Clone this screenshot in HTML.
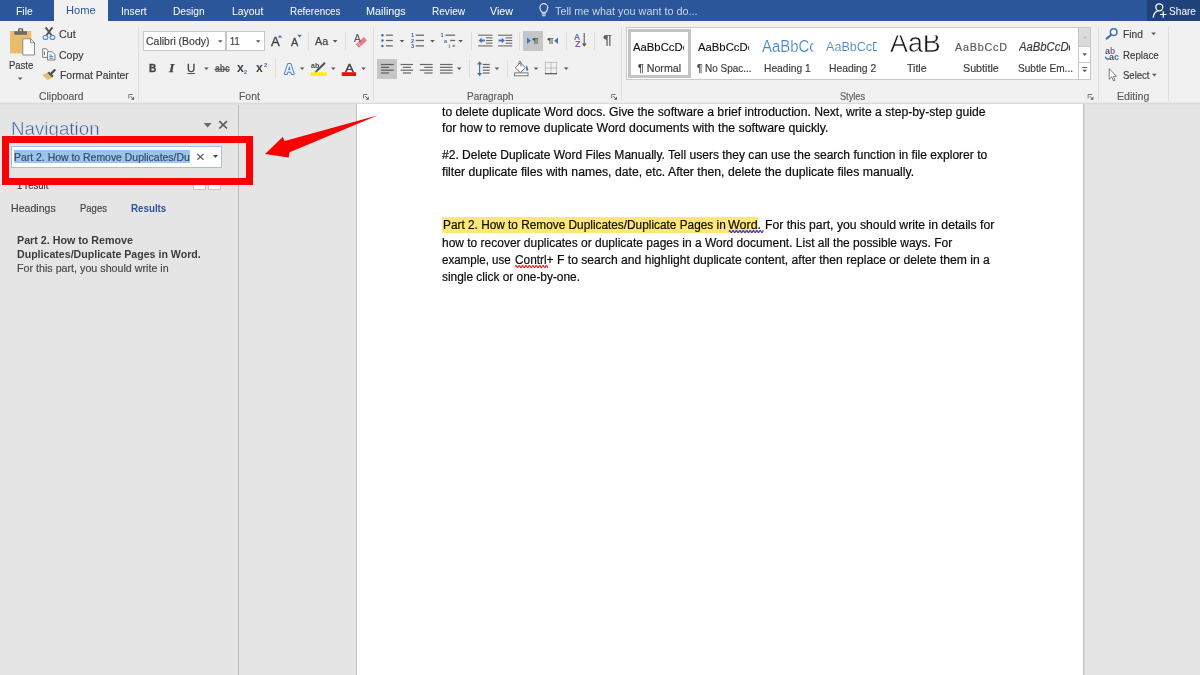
<!DOCTYPE html>
<html><head><meta charset="utf-8"><title>Word</title>
<style>

html,body{margin:0;padding:0;}
body{width:1200px;height:675px;overflow:hidden;position:relative;background:#e5e5e5;font-family:"Liberation Sans",sans-serif;color:#444;}
.t{position:absolute;white-space:nowrap;line-height:1;transform-origin:0 0;display:block;}
.a{position:absolute;display:block;}
.sep{position:absolute;width:1px;background:#dedede;}
svg{position:absolute;overflow:visible;}

</style></head>
<body>

<!-- title/tab bar -->
<div class="a" style="left:0;top:0;width:1200px;height:21px;background:#2b579a;"></div>
<div class="a" style="left:1147px;top:0;width:53px;height:21px;background:#1e4279;"></div>
<div class="a" style="left:54px;top:0;width:54px;height:22px;background:#f1f1f1;"></div>
<!-- ribbon -->
<div class="a" style="left:0;top:21px;width:1200px;height:82px;background:#f1f1f1;"></div>
<div class="a" style="left:0;top:102px;width:1200px;height:1px;background:#ebebeb;"></div>
<div class="a" style="left:0;top:103px;width:1200px;height:1px;background:#dadada;"></div>
<div class="a" style="left:0;top:104px;width:1200px;height:1px;background:#e1e1e1;"></div>
<!-- nav pane border -->
<div class="a" style="left:238px;top:105px;width:1px;height:570px;background:#bdbdbd;"></div>
<!-- page -->
<div class="a" style="left:1084px;top:104px;width:1px;height:571px;background:#dadada;"></div>
<div class="a" style="left:356px;top:104px;width:728px;height:571px;background:#c2c2c2;"></div>
<div class="a" style="left:357px;top:104px;width:726px;height:571px;background:#ffffff;"></div>

<!-- group separators -->
<div class="sep" style="left:138px;top:27px;height:74px;"></div>
<div class="sep" style="left:373px;top:27px;height:74px;"></div>
<div class="sep" style="left:621px;top:27px;height:74px;"></div>
<div class="sep" style="left:1098px;top:27px;height:74px;"></div>
<div class="sep" style="left:1168px;top:27px;height:74px;"></div>
<!-- small separators -->
<div class="sep" style="left:308px;top:32px;height:18px;"></div>
<div class="sep" style="left:345px;top:32px;height:18px;"></div>
<div class="sep" style="left:275px;top:59px;height:20px;"></div>
<div class="sep" style="left:471px;top:32px;height:18px;"></div>
<div class="sep" style="left:519px;top:32px;height:18px;"></div>
<div class="sep" style="left:566px;top:32px;height:18px;"></div>
<div class="sep" style="left:594px;top:32px;height:18px;"></div>
<div class="sep" style="left:469px;top:60px;height:18px;"></div>
<div class="sep" style="left:507px;top:60px;height:18px;"></div>

<!-- font boxes -->
<div class="a" style="left:143px;top:31px;width:83px;height:20px;background:#fff;border:1px solid #c6c6c6;box-sizing:border-box;"></div>
<div class="a" style="left:226px;top:31px;width:39px;height:20px;background:#fff;border:1px solid #c6c6c6;box-sizing:border-box;"></div>

<!-- selected buttons -->
<div class="a" style="left:523px;top:31px;width:20px;height:20px;background:#c6c6c6;"></div>
<div class="a" style="left:377px;top:59px;width:20px;height:20px;background:#c6c6c6;"></div>

<!-- styles gallery -->
<div class="a" style="left:626px;top:27px;width:465px;height:53px;background:#fff;border:1px solid #c8c8c8;box-sizing:border-box;"></div>
<div class="a" style="left:628px;top:29px;width:63px;height:49px;border:3px solid #c4c4c4;box-sizing:border-box;background:#fff;"></div>
<div class="a" style="left:1078px;top:28px;width:12px;height:18px;background:#dbdbdb;"></div>
<div class="a" style="left:1078px;top:27px;width:1px;height:53px;background:#c8c8c8;"></div>
<div class="a" style="left:1078px;top:46px;width:13px;height:1px;background:#c8c8c8;"></div>
<div class="a" style="left:1078px;top:62px;width:13px;height:1px;background:#c8c8c8;"></div>

<!-- nav: search box -->
<div class="a" style="left:11px;top:146px;width:211px;height:22px;background:#fff;border:1px solid #9dc1e8;box-sizing:border-box;"></div>
<div class="a" style="left:13.5px;top:150px;width:176.3px;height:13px;background:#97c5ee;"></div>
<!-- nav: prev/next buttons (partly hidden) -->
<div class="a" style="left:192.5px;top:178px;width:13px;height:11.5px;background:#fdfdfd;border:1px solid #c8c8c8;box-sizing:border-box;"></div>
<div class="a" style="left:208.3px;top:178px;width:12.7px;height:11.5px;background:#fdfdfd;border:1px solid #c8c8c8;box-sizing:border-box;"></div>

<!-- doc highlight -->
<div class="a" style="left:442px;top:217px;width:316.4px;height:15.8px;background:#fee872;"></div>
<svg style="left:0;top:0;will-change:transform" width="1200" height="675" viewBox="0 0 1200 675">
<!-- paste -->
<rect x="10" y="31" width="21.2" height="22.4" fill="#e9bd6c"/>
<path d="M14.2,34.8 V31.2 H18 V29.6 Q18,28.3 19.4,28.3 H21.9 Q23.3,28.3 23.3,29.6 V31.2 H27 V34.8 Z" fill="#6a6a6a"/>
<rect x="19.7" y="29.5" width="1.9" height="1.4" fill="#f3f3f3"/>
<path d="M22.8,38.8 H30.6 L34.5,42.7 V55 H22.8 Z" fill="#fff" stroke="#8c8c8c" stroke-width="1"/>
<path d="M30.6,38.8 V42.7 H34.5" fill="none" stroke="#8c8c8c" stroke-width="1"/>
<polygon points="17.90,77.60 22.50,77.60 20.20,80.00" fill="#5a5a5a"/>
<!-- cut -->
<path d="M45.6,27.4 L52,36 M52.4,27.4 L46,36" stroke="#555" stroke-width="2" fill="none"/>
<ellipse cx="45.5" cy="37.4" rx="2.4" ry="2" fill="none" stroke="#5b8fd0" stroke-width="1.1"/>
<ellipse cx="52.5" cy="37.4" rx="2.4" ry="2" fill="none" stroke="#5b8fd0" stroke-width="1.1"/>
<!-- copy -->
<path d="M42.7,48.8 H46.2 L48.3,50.9 V57.4 H42.7 Z" fill="#fff" stroke="#777" stroke-width="1"/>
<path d="M44.5,51.5 V55" stroke="#3c74bc" stroke-width="1"/>
<path d="M47.6,51.8 H52.2 L54.9,54.5 V60 H47.6 Z" fill="#fff" stroke="#777" stroke-width="1"/>
<path d="M49.3,55 H52 M49.3,56.6 H53.2 M49.3,58.2 H53.2" stroke="#3c74bc" stroke-width="0.9"/>
<!-- format painter -->
<polygon points="42.3,75.3 47.6,72.6 52.6,77.2 47.8,79.9" fill="#e9bd6c"/>
<path d="M48.2,72.2 L52.9,76.6" stroke="#555" stroke-width="2.2"/>
<path d="M50.8,74 L54.6,70.2" stroke="#555" stroke-width="2.4" stroke-linecap="round"/>
<path d="M132.7,94.5 H128.8 V98.4" fill="none" stroke="#777" stroke-width="1"/><path d="M130.5,96.2 L133.3,99.0" stroke="#666" stroke-width="1"/><polygon points="134.1,96.6 134.1,99.8 130.9,99.8" fill="#606060"/>


<!-- font dropdown arrows -->
<polygon points="218.00,40.15 222.60,40.15 220.30,42.65" fill="#5a5a5a"/>
<polygon points="255.90,40.15 260.50,40.15 258.20,42.65" fill="#5a5a5a"/>
<!-- grow / shrink triangles -->
<polygon points="277.7,37.6 282.2,37.6 279.95,35" fill="#3c74bc"/>
<polygon points="297.2,34.8 301.9,34.8 299.55,37.5" fill="#3c74bc"/>
<polygon points="332.80,40.10 337.40,40.10 335.10,42.70" fill="#5a5a5a"/>
<!-- clear formatting eraser -->
<polygon points="363.9,37 366.9,40.6 359,47.7 355.7,44.2" fill="#e8788a"/>
<path d="M357.5,42.7 L360.8,46.2" stroke="#f6d5da" stroke-width="0.8"/>
<!-- U underline, abc strike -->
<path d="M187.40,73.50 H194.80" stroke="#555" stroke-width="1.1"/>
<path d="M214.40,69.30 H229.80" stroke="#555" stroke-width="1.0"/>
<polygon points="204.10,67.40 208.70,67.40 206.40,70.00" fill="#5a5a5a"/>
<!-- text effects A (outlined) -->
<text x="289.4" y="73.9" text-anchor="middle" font-family="Liberation Sans, sans-serif" font-weight="bold" font-size="14.6" fill="#4f88cf" stroke="#4f88cf" stroke-width="2.2" stroke-linejoin="round" textLength="9.6" lengthAdjust="spacingAndGlyphs">A</text><text x="289.4" y="73.9" text-anchor="middle" font-family="Liberation Sans, sans-serif" font-weight="bold" font-size="14.6" fill="#f1f6fd" textLength="9.6" lengthAdjust="spacingAndGlyphs">A</text>
<polygon points="299.80,67.40 304.40,67.40 302.10,70.00" fill="#5a5a5a"/>
<!-- highlight -->
<rect x="310.7" y="72.3" width="16.1" height="3.7" fill="#fff200"/>
<path d="M316.4,71.2 L325,62.8" stroke="#505050" stroke-width="2"/>
<path d="M315.2,72.2 L317.4,70" stroke="#3c74bc" stroke-width="1.6"/>
<polygon points="330.90,67.40 335.50,67.40 333.20,70.00" fill="#5a5a5a"/>
<!-- font colour -->
<rect x="341.7" y="72.2" width="14.3" height="3.8" fill="#ee1111"/>
<polygon points="361.20,67.40 365.80,67.40 363.50,70.00" fill="#5a5a5a"/>
<path d="M367.4,94.5 H363.5 V98.4" fill="none" stroke="#777" stroke-width="1"/><path d="M365.2,96.2 L368.0,99.0" stroke="#666" stroke-width="1"/><polygon points="368.8,96.6 368.8,99.8 365.6,99.8" fill="#606060"/>

<!-- bullets -->
<circle cx="382.4" cy="35.2" r="1.25" fill="#3f6fb3"/>
<path d="M385.90,35.20 H392.80" stroke="#6a6a6a" stroke-width="1.3"/>
<circle cx="382.4" cy="40.5" r="1.25" fill="#3f6fb3"/>
<path d="M385.90,40.50 H392.80" stroke="#6a6a6a" stroke-width="1.3"/>
<circle cx="382.4" cy="45.9" r="1.25" fill="#3f6fb3"/>
<path d="M385.90,45.90 H392.80" stroke="#6a6a6a" stroke-width="1.3"/>
<polygon points="399.70,40.00 404.30,40.00 402.00,42.60" fill="#5a5a5a"/>
<!-- numbering -->
<text x="412.5" y="37.3" text-anchor="middle" font-family="Liberation Sans, sans-serif" font-weight="bold" font-size="5.8" fill="#3f6fb3">1</text>
<path d="M415.70,35.20 H424.00" stroke="#6a6a6a" stroke-width="1.3"/>
<text x="412.5" y="42.6" text-anchor="middle" font-family="Liberation Sans, sans-serif" font-weight="bold" font-size="5.8" fill="#3f6fb3">2</text>
<path d="M415.70,40.50 H424.00" stroke="#6a6a6a" stroke-width="1.3"/>
<text x="412.5" y="48.0" text-anchor="middle" font-family="Liberation Sans, sans-serif" font-weight="bold" font-size="5.8" fill="#3f6fb3">3</text>
<path d="M415.70,45.90 H424.00" stroke="#6a6a6a" stroke-width="1.3"/>
<polygon points="430.20,40.00 434.80,40.00 432.50,42.60" fill="#5a5a5a"/>
<!-- multilevel -->
<text x="442" y="37.4" text-anchor="middle" font-family="Liberation Sans, sans-serif" font-weight="bold" font-size="5.6" fill="#3f6fb3">1</text>
<path d="M445.50,35.20 H455.10" stroke="#6a6a6a" stroke-width="1.3"/>
<text x="445.6" y="42.6" text-anchor="middle" font-family="Liberation Sans, sans-serif" font-weight="bold" font-size="5.6" fill="#3f6fb3">a</text>
<path d="M450.10,40.50 H455.10" stroke="#6a6a6a" stroke-width="1.3"/>
<text x="449.4" y="48" text-anchor="middle" font-family="Liberation Sans, sans-serif" font-weight="bold" font-size="5.6" fill="#3f6fb3">i</text>
<path d="M452.40,45.90 H455.10" stroke="#6a6a6a" stroke-width="1.3"/>
<polygon points="458.30,40.00 462.90,40.00 460.60,42.60" fill="#5a5a5a"/>
<!-- decrease indent -->
<path d="M478.10,35.20 H492.50" stroke="#6a6a6a" stroke-width="1.1"/>
<path d="M486.00,37.85 H492.50" stroke="#6a6a6a" stroke-width="1.1"/>
<path d="M486.00,40.50 H492.50" stroke="#6a6a6a" stroke-width="1.1"/>
<path d="M486.00,43.20 H492.50" stroke="#6a6a6a" stroke-width="1.1"/>
<path d="M478.10,45.90 H492.50" stroke="#6a6a6a" stroke-width="1.1"/>
<path d="M478.6,40.5 L481.6,37.7 V39.6 H484.8 V41.4 H481.6 V43.3 Z" fill="#3c74bc"/>
<!-- increase indent -->
<path d="M498.00,35.20 H512.20" stroke="#6a6a6a" stroke-width="1.1"/>
<path d="M505.60,37.85 H512.20" stroke="#6a6a6a" stroke-width="1.1"/>
<path d="M505.60,40.50 H512.20" stroke="#6a6a6a" stroke-width="1.1"/>
<path d="M505.60,43.20 H512.20" stroke="#6a6a6a" stroke-width="1.1"/>
<path d="M498.00,45.90 H512.20" stroke="#6a6a6a" stroke-width="1.1"/>
<path d="M504.8,40.5 L501.8,37.7 V39.6 H498.6 V41.4 H501.8 V43.3 Z" fill="#3c74bc"/>
<!-- ltr/rtl -->
<polygon points="527,37.5 531,40.7 527,43.9" fill="#3c74bc"/>
<polygon points="558,37.5 554.1,40.7 558,43.9" fill="#3c74bc"/>
<!-- sort -->
<path d="M584.2,33 V45.6" stroke="#5a5a5a" stroke-width="1.1"/><polygon points="581.8,43.6 586.7,43.6 584.25,46.8" fill="#5a5a5a"/>
<!-- align left/center/right/justify -->
<path d="M380.90,64.50 H393.70" stroke="#5e5e5e" stroke-width="1.2"/>
<path d="M400.60,64.50 H413.00" stroke="#6a6a6a" stroke-width="1.2"/>
<path d="M419.80,64.50 H432.70" stroke="#6a6a6a" stroke-width="1.2"/>
<path d="M440.00,64.50 H452.60" stroke="#6a6a6a" stroke-width="1.2"/>
<path d="M482.80,64.50 H489.70" stroke="#6a6a6a" stroke-width="1.2"/>
<path d="M380.90,67.35 H389.10" stroke="#5e5e5e" stroke-width="1.2"/>
<path d="M402.90,67.35 H411.10" stroke="#6a6a6a" stroke-width="1.2"/>
<path d="M424.20,67.35 H432.70" stroke="#6a6a6a" stroke-width="1.2"/>
<path d="M440.00,67.35 H452.60" stroke="#6a6a6a" stroke-width="1.2"/>
<path d="M482.80,67.35 H489.70" stroke="#6a6a6a" stroke-width="1.2"/>
<path d="M380.90,70.20 H393.70" stroke="#5e5e5e" stroke-width="1.2"/>
<path d="M400.60,70.20 H413.00" stroke="#6a6a6a" stroke-width="1.2"/>
<path d="M419.80,70.20 H432.70" stroke="#6a6a6a" stroke-width="1.2"/>
<path d="M440.00,70.20 H452.60" stroke="#6a6a6a" stroke-width="1.2"/>
<path d="M482.80,70.20 H489.70" stroke="#6a6a6a" stroke-width="1.2"/>
<path d="M380.90,73.00 H389.10" stroke="#5e5e5e" stroke-width="1.2"/>
<path d="M402.90,73.00 H411.10" stroke="#6a6a6a" stroke-width="1.2"/>
<path d="M424.20,73.00 H432.70" stroke="#6a6a6a" stroke-width="1.2"/>
<path d="M440.00,73.00 H452.60" stroke="#6a6a6a" stroke-width="1.2"/>
<path d="M482.80,73.00 H489.70" stroke="#6a6a6a" stroke-width="1.2"/>
<polygon points="456.90,67.40 461.50,67.40 459.20,70.00" fill="#5a5a5a"/>
<!-- line spacing -->
<path d="M479.6,62.5 V75" stroke="#3c74bc" stroke-width="1.2"/>
<polygon points="477,64.4 479.6,61.2 482.2,64.4" fill="#3c74bc"/><polygon points="477,73 479.6,76.2 482.2,73" fill="#3c74bc"/>
<polygon points="494.60,67.40 499.20,67.40 496.90,70.00" fill="#5a5a5a"/>
<!-- shading -->
<path d="M520.3,62.7 L525.4,67.8 L520.3,72.6 L515.3,67.8 Z" fill="#fff" stroke="#6a6a6a" stroke-width="1"/>
<path d="M520.9,66.3 V62.4 Q520.9,61.3 519.8,61.3 Q518.8,61.3 518.8,62.4 V64" fill="none" stroke="#6a6a6a" stroke-width="0.9"/>
<path d="M526.2,65.2 Q528.7,67.6 528.3,69.4 Q527.8,71.2 526.3,70.6 Z" fill="#3c74bc"/>
<rect x="514.6" y="72.9" width="13.4" height="2.9" fill="#fff" stroke="#6a6a6a" stroke-width="0.9"/>
<polygon points="533.70,67.40 538.30,67.40 536.00,70.00" fill="#5a5a5a"/>
<!-- borders -->
<path d="M545.4,62.4 H556.6 M545.4,68 H556.6 M545.4,62.4 V73.4 M551,62.4 V73.4 M556.6,62.4 V73.4" stroke="#8a8a8a" stroke-width="0.9" stroke-dasharray="1 1" fill="none"/>
<path d="M544.90,73.70 H557.00" stroke="#555" stroke-width="1.2"/>
<polygon points="563.90,67.40 568.50,67.40 566.20,70.00" fill="#5a5a5a"/>
<path d="M615.6,94.5 H611.7 V98.4" fill="none" stroke="#777" stroke-width="1"/><path d="M613.4,96.2 L616.2,99.0" stroke="#666" stroke-width="1"/><polygon points="617.0,96.6 617.0,99.8 613.8,99.8" fill="#606060"/>

<!-- gallery scroll -->
<polygon points="1082.6,38.2 1086.6,38.2 1084.6,35.9" fill="#bdbdbd"/>
<polygon points="1082.40,53.30 1087.00,53.30 1084.70,55.90" fill="#5a5a5a"/>
<path d="M1082.2,67.6 H1087.2" stroke="#5a5a5a" stroke-width="1"/>
<polygon points="1082.40,69.70 1087.00,69.70 1084.70,72.30" fill="#5a5a5a"/>
<path d="M1092.0,94.5 H1088.1 V98.4" fill="none" stroke="#777" stroke-width="1"/><path d="M1089.8,96.2 L1092.6,99.0" stroke="#666" stroke-width="1"/><polygon points="1093.4,96.6 1093.4,99.8 1090.2,99.8" fill="#606060"/>


<!-- find -->
<circle cx="1113.7" cy="32.1" r="3.3" fill="#fff" stroke="#3f6fb3" stroke-width="1.5"/>
<path d="M1111.2,34.8 L1106.6,38.6" stroke="#3f6fb3" stroke-width="2.1" stroke-linecap="round"/>
<polygon points="1151.30,32.60 1155.90,32.60 1153.60,35.20" fill="#5a5a5a"/>
<!-- replace: small curved arrow -->
<path d="M1105.4,56.6 Q1105.6,59 1108,59" fill="none" stroke="#3f6fb3" stroke-width="1.1"/>
<polygon points="1107.6,57.6 1109.4,59.1 1107.6,60.5" fill="#3f6fb3"/>
<!-- select cursor -->
<path d="M1109.2,68.6 V79.2 L1111.7,76.9 L1113.5,80.9 L1115,80.2 L1113.3,76.4 L1116.4,76.2 Z" fill="#fff" stroke="#6a6a6a" stroke-width="0.9" stroke-linejoin="round"/>
<polygon points="1152.00,73.80 1156.60,73.80 1154.30,76.40" fill="#5a5a5a"/>


<!-- lightbulb -->
<path d="M541.9,12.2 Q539.9,10.4 539.9,7.6 A3.9,3.9 0 0 1 547.7,7.6 Q547.7,10.4 545.7,12.2 Z" fill="none" stroke="#e8eef8" stroke-width="1.15"/>
<path d="M541.8,13.9 H545.8 M542,15.7 H545.6" stroke="#e8eef8" stroke-width="1.1"/>
<!-- share -->
<circle cx="1159.3" cy="7.3" r="3.5" fill="none" stroke="#fff" stroke-width="1.3"/>
<path d="M1153.2,17.6 Q1153.6,12.6 1157.6,10.9" fill="none" stroke="#fff" stroke-width="1.3"/>
<path d="M1160,14.5 H1166.4 M1163.2,11.3 V17.7" stroke="#fff" stroke-width="1.2"/>


<!-- nav header -->
<polygon points="203.6,123.1 211.7,123.1 207.65,127.5" fill="#6a6a6a"/>
<path d="M219.3,121.2 L227,128.5 M227,121.2 L219.3,128.5" stroke="#5a5a5a" stroke-width="1.7"/>
<!-- search box x + arrow -->
<path d="M197.3,154 L203.5,159.8 M203.5,154 L197.3,159.8" stroke="#666" stroke-width="1.3"/>
<polygon points="213,155 218,155 215.5,158" fill="#444"/>

<!-- proofing squiggles --><path d="M728.80,231.60 Q729.65,229.70 730.50,231.60 Q731.35,233.50 732.20,231.60 Q733.05,229.70 733.90,231.60 Q734.75,233.50 735.60,231.60 Q736.45,229.70 737.30,231.60 Q738.15,233.50 739.00,231.60 Q739.85,229.70 740.70,231.60 Q741.55,233.50 742.40,231.60 Q743.25,229.70 744.10,231.60 Q744.95,233.50 745.80,231.60 Q746.65,229.70 747.50,231.60 Q748.35,233.50 749.20,231.60 Q750.05,229.70 750.90,231.60 Q751.75,233.50 752.60,231.60 Q753.45,229.70 754.30,231.60 Q755.15,233.50 756.00,231.60 Q756.85,229.70 757.70,231.60 Q758.55,233.50 759.40,231.60 Q760.25,229.70 761.10,231.60 Q761.95,233.50 762.80,231.60 Q762.90,229.70 763.00,231.60" fill="none" stroke="#2c33d6" stroke-width="1.15"/><path d="M515.00,266.60 Q515.85,264.70 516.70,266.60 Q517.55,268.50 518.40,266.60 Q519.25,264.70 520.10,266.60 Q520.95,268.50 521.80,266.60 Q522.65,264.70 523.50,266.60 Q524.35,268.50 525.20,266.60 Q526.05,264.70 526.90,266.60 Q527.75,268.50 528.60,266.60 Q529.45,264.70 530.30,266.60 Q531.15,268.50 532.00,266.60 Q532.85,264.70 533.70,266.60 Q534.55,268.50 535.40,266.60 Q536.25,264.70 537.10,266.60 Q537.95,268.50 538.80,266.60 Q539.65,264.70 540.50,266.60 Q541.35,268.50 542.20,266.60 Q543.05,264.70 543.90,266.60 Q544.75,268.50 545.60,266.60 Q546.45,264.70 547.30,266.60 Q547.40,268.50 547.50,266.60" fill="none" stroke="#e02020" stroke-width="1.15"/></svg>
<!-- red annotation box + arrow (drawn last, above nav contents) -->

<!-- text -->
<div id="txt" style="position:absolute;left:0;top:0;width:1200px;height:675px;will-change:transform;">
<span class="t" style="left:16.30px;top:6.00px;font-size:11.5px;color:#fff;transform:scaleX(0.9012);">File</span>
<span class="t" style="left:66.30px;top:5.00px;font-size:11.5px;color:#2b579a;transform:scaleX(0.9678);">Home</span>
<span class="t" style="left:121.30px;top:6.00px;font-size:11.5px;color:#fff;transform:scaleX(0.8934);">Insert</span>
<span class="t" style="left:173.30px;top:6.00px;font-size:11.5px;color:#fff;transform:scaleX(0.8852);">Design</span>
<span class="t" style="left:231.70px;top:6.00px;font-size:11.5px;color:#fff;transform:scaleX(0.9064);">Layout</span>
<span class="t" style="left:289.50px;top:6.00px;font-size:11.5px;color:#fff;transform:scaleX(0.8587);">References</span>
<span class="t" style="left:366.20px;top:6.00px;font-size:11.5px;color:#fff;transform:scaleX(0.9434);">Mailings</span>
<span class="t" style="left:432.00px;top:6.00px;font-size:11.5px;color:#fff;transform:scaleX(0.8749);">Review</span>
<span class="t" style="left:490.00px;top:6.00px;font-size:11.5px;color:#fff;transform:scaleX(0.9305);">View</span>
<span class="t" style="left:554.50px;top:6.00px;font-size:11.5px;color:#c9d5eb;transform:scaleX(0.9406);">Tell me what you want to do...</span>
<span class="t" style="left:1169.00px;top:6.00px;font-size:11.5px;color:#fff;transform:scaleX(0.8798);">Share</span>
<span class="t" style="left:8.70px;top:60.00px;font-size:11.4px;color:#3c3c3c;-webkit-text-stroke:0.18px #3c3c3c;transform:scaleX(0.8339);">Paste</span>
<span class="t" style="left:59.20px;top:29.00px;font-size:11.4px;color:#3c3c3c;-webkit-text-stroke:0.18px #3c3c3c;transform:scaleX(0.9360);">Cut</span>
<span class="t" style="left:59.20px;top:50.00px;font-size:11.4px;color:#3c3c3c;-webkit-text-stroke:0.18px #3c3c3c;transform:scaleX(0.9250);">Copy</span>
<span class="t" style="left:59.50px;top:70.00px;font-size:11.4px;color:#3c3c3c;-webkit-text-stroke:0.18px #3c3c3c;transform:scaleX(0.9131);">Format Painter</span>
<span class="t" style="left:38.70px;top:91.00px;font-size:10.5px;color:#5c5c5c;-webkit-text-stroke:0.18px #5c5c5c;transform:scaleX(0.9921);">Clipboard</span>
<span class="t" style="left:146.00px;top:36.00px;font-size:11.4px;color:#3c3c3c;-webkit-text-stroke:0.18px #3c3c3c;transform:scaleX(0.9203);">Calibri (Body)</span>
<span class="t" style="left:229.50px;top:36.00px;font-size:11.4px;color:#3c3c3c;-webkit-text-stroke:0.18px #3c3c3c;transform:scaleX(0.8032);">11</span>
<span class="t" style="left:238.60px;top:91.00px;font-size:10.5px;color:#5c5c5c;-webkit-text-stroke:0.18px #5c5c5c;transform:scaleX(0.9897);">Font</span>
<span class="t" style="left:467.40px;top:91.00px;font-size:10.5px;color:#5c5c5c;-webkit-text-stroke:0.18px #5c5c5c;transform:scaleX(0.9501);">Paragraph</span>
<span class="t" style="left:840.00px;top:91.00px;font-size:10.5px;color:#5c5c5c;-webkit-text-stroke:0.18px #5c5c5c;transform:scaleX(0.8743);">Styles</span>
<span class="t" style="left:1116.70px;top:91.00px;font-size:10.5px;color:#5c5c5c;-webkit-text-stroke:0.18px #5c5c5c;transform:scaleX(1.0059);">Editing</span>
<span class="t" style="left:1122.50px;top:29.00px;font-size:11.4px;color:#3c3c3c;-webkit-text-stroke:0.18px #3c3c3c;transform:scaleX(0.8930);">Find</span>
<span class="t" style="left:1122.50px;top:50.00px;font-size:11.4px;color:#3c3c3c;-webkit-text-stroke:0.18px #3c3c3c;transform:scaleX(0.8541);">Replace</span>
<span class="t" style="left:1122.50px;top:70.00px;font-size:11.4px;color:#3c3c3c;-webkit-text-stroke:0.18px #3c3c3c;transform:scaleX(0.8367);">Select</span>
<span class="t" style="left:633.30px;top:42.00px;font-size:11.4px;color:#111;-webkit-text-stroke:0.15px #111;clip-path:inset(-2px 4.2px -2px 0);transform:scaleX(0.9925);">AaBbCcDc</span>
<span class="t" style="left:637.60px;top:63.00px;font-size:10.5px;color:#3c3c3c;-webkit-text-stroke:0.18px #3c3c3c;transform:scaleX(1.0164);">¶ Normal</span>
<span class="t" style="left:697.60px;top:42.00px;font-size:11.4px;color:#111;-webkit-text-stroke:0.15px #111;clip-path:inset(-2px 4.2px -2px 0);transform:scaleX(0.9925);">AaBbCcDc</span>
<span class="t" style="left:696.70px;top:63.00px;font-size:10.5px;color:#3c3c3c;-webkit-text-stroke:0.18px #3c3c3c;transform:scaleX(0.9480);">¶ No Spac...</span>
<span class="t" style="left:762.00px;top:39.00px;font-size:15.8px;color:#4a86c6;-webkit-text-stroke:0.15px #fff;clip-path:inset(-2px 3.6px -3px 0);transform:scaleX(0.9456);">AaBbCc</span>
<span class="t" style="left:764.30px;top:63.00px;font-size:10.5px;color:#3c3c3c;-webkit-text-stroke:0.18px #3c3c3c;transform:scaleX(0.9755);">Heading 1</span>
<span class="t" style="left:826.30px;top:41.00px;font-size:12.8px;color:#4a86c6;-webkit-text-stroke:0.1px #fff;clip-path:inset(-2px 4.4px -3px 0);transform:scaleX(0.9824);">AaBbCcD</span>
<span class="t" style="left:828.70px;top:63.00px;font-size:10.5px;color:#3c3c3c;-webkit-text-stroke:0.18px #3c3c3c;transform:scaleX(0.9880);">Heading 2</span>
<span class="t" style="left:906.60px;top:63.00px;font-size:10.5px;color:#3c3c3c;-webkit-text-stroke:0.18px #3c3c3c;transform:scaleX(1.0076);">Title</span>
<span class="t" style="left:954.80px;top:42.00px;font-size:10.7px;color:#5a5a5a;letter-spacing:0.8px;-webkit-text-stroke:0.18px #5a5a5a;transform:scaleX(1.0051);">AaBbCcD</span>
<span class="t" style="left:963.00px;top:63.00px;font-size:10.5px;color:#3c3c3c;-webkit-text-stroke:0.18px #3c3c3c;transform:scaleX(1.0219);">Subtitle</span>
<span class="t" style="left:1019.00px;top:41.00px;font-size:12px;color:#3c3c3c;font-style:italic;clip-path:inset(-2px 4.4px -3px 0);-webkit-text-stroke:0.18px #3c3c3c;transform:scaleX(0.9406);">AaBbCcDc</span>
<span class="t" style="left:1017.50px;top:63.00px;font-size:10.5px;color:#3c3c3c;-webkit-text-stroke:0.18px #3c3c3c;transform:scaleX(0.9615);">Subtle Em...</span>
<span class="t" style="left:10.90px;top:120.00px;font-size:18px;color:#3b63a3;-webkit-text-stroke:0.45px #e5e5e5;transform:scaleX(1.0416);">Navigation</span>
<span class="t" style="left:14.00px;top:152.00px;font-size:10.5px;color:#3a4a5c;-webkit-text-stroke:0.18px #3a4a5c;transform:scaleX(0.9942);">Part 2. How to Remove Duplicates/Du</span>
<span class="t" style="left:17.30px;top:180.00px;font-size:10.5px;color:#3c3c3c;-webkit-text-stroke:0.18px #3c3c3c;transform:scaleX(0.9118);">1 result</span>
<span class="t" style="left:11.30px;top:203.00px;font-size:10.5px;color:#454545;-webkit-text-stroke:0.18px #454545;transform:scaleX(1.0073);">Headings</span>
<span class="t" style="left:79.70px;top:203.00px;font-size:10.5px;color:#454545;-webkit-text-stroke:0.18px #454545;transform:scaleX(0.9033);">Pages</span>
<span class="t" style="left:130.70px;top:203.00px;font-size:10.5px;color:#2b579a;font-weight:bold;transform:scaleX(0.9305);">Results</span>
<span class="t" style="left:17.30px;top:235.00px;font-size:10.5px;color:#3c3c3c;font-weight:bold;transform:scaleX(1.0195);">Part 2. How to Remove</span>
<span class="t" style="left:17.30px;top:249.00px;font-size:10.5px;color:#3c3c3c;font-weight:bold;transform:scaleX(1.0101);">Duplicates/Duplicate Pages in Word.</span>
<span class="t" style="left:17.30px;top:263.00px;font-size:10.5px;color:#484848;-webkit-text-stroke:0.18px #484848;transform:scaleX(1.0193);">For this part, you should write in</span>
<span class="t" style="left:442.30px;top:106.00px;font-size:12px;color:#0c0c0c;-webkit-text-stroke:0.2px #0c0c0c;transform:scaleX(1.0151);">to delete duplicate Word docs. Give the software a brief introduction. Next, write a step-by-step guide</span>
<span class="t" style="left:442.30px;top:122.00px;font-size:12px;color:#0c0c0c;-webkit-text-stroke:0.2px #0c0c0c;transform:scaleX(1.0250);">for how to remove duplicate Word documents with the software quickly.</span>
<span class="t" style="left:442.30px;top:149.00px;font-size:12px;color:#0c0c0c;-webkit-text-stroke:0.2px #0c0c0c;transform:scaleX(1.0029);">#2. Delete Duplicate Word Files Manually. Tell users they can use the search function in file explorer to</span>
<span class="t" style="left:442.30px;top:166.00px;font-size:12px;color:#0c0c0c;-webkit-text-stroke:0.2px #0c0c0c;transform:scaleX(1.0205);">filter duplicate files with names, date, etc. After then, delete the duplicate files manually.</span>
<span class="t" style="left:442.50px;top:219.00px;font-size:12px;color:#0c0c0c;-webkit-text-stroke:0.2px #0c0c0c;transform:scaleX(0.9857);">Part 2. How to Remove Duplicates/Duplicate Pages in</span>
<span class="t" style="left:728.40px;top:219.00px;font-size:12px;color:#0c0c0c;-webkit-text-stroke:0.2px #0c0c0c;transform:scaleX(1.0410);">Word.</span>
<span class="t" style="left:765.00px;top:219.00px;font-size:12px;color:#0c0c0c;-webkit-text-stroke:0.2px #0c0c0c;transform:scaleX(1.0171);">For this part, you should write in details for</span>
<span class="t" style="left:442.30px;top:237.00px;font-size:12px;color:#0c0c0c;-webkit-text-stroke:0.2px #0c0c0c;transform:scaleX(0.9977);">how to recover duplicates or duplicate pages in a Word document. List all the possible ways. For</span>
<span class="t" style="left:442.30px;top:254.00px;font-size:12px;color:#0c0c0c;-webkit-text-stroke:0.2px #0c0c0c;transform:scaleX(0.9625);">example, use</span>
<span class="t" style="left:515.00px;top:254.00px;font-size:12px;color:#0c0c0c;-webkit-text-stroke:0.2px #0c0c0c;transform:scaleX(0.9864);">Contrl+</span>
<span class="t" style="left:557.20px;top:254.00px;font-size:12px;color:#0c0c0c;-webkit-text-stroke:0.2px #0c0c0c;transform:scaleX(1.0106);">F to search and highlight duplicate content, after then replace or delete them in a</span>
<span class="t" style="left:442.30px;top:271.00px;font-size:12px;color:#0c0c0c;-webkit-text-stroke:0.2px #0c0c0c;transform:scaleX(0.9899);">single click or one-by-one.</span>
<span class="t" style="left:148.50px;top:63.00px;font-size:11.3px;color:#444;font-weight:bold;-webkit-text-stroke:0.3px #444;transform:scaleX(0.8933);">B</span>
<span class="t" style="left:169.20px;top:62.00px;font-size:12px;color:#444;font-weight:bold;font-style:italic;font-family:'Liberation Serif',serif;-webkit-text-stroke:0.25px #444;transform:scaleX(1.1559);">I</span>
<span class="t" style="left:186.90px;top:63.00px;font-size:11.4px;color:#444;-webkit-text-stroke:0.3px #444;transform:scaleX(1.0080);">U</span>
<span class="t" style="left:214.70px;top:64.00px;font-size:10px;color:#555;font-weight:bold;transform:scaleX(0.8646);">abc</span>
<span class="t" style="left:236.60px;top:62.00px;font-size:12px;color:#444;font-weight:bold;transform:scaleX(1.0318);">x</span>
<span class="t" style="left:244.30px;top:70.00px;font-size:5.5px;color:#3f6fb3;font-weight:bold;transform:scaleX(1.0122);">2</span>
<span class="t" style="left:255.90px;top:62.00px;font-size:12px;color:#444;font-weight:bold;transform:scaleX(1.0168);">x</span>
<span class="t" style="left:263.70px;top:63.00px;font-size:5.5px;color:#3f6fb3;font-weight:bold;transform:scaleX(1.0776);">2</span>
<span class="t" style="left:270.60px;top:36.00px;font-size:12.7px;color:#444;-webkit-text-stroke:0.35px #444;transform:scaleX(1.0391);">A</span>
<span class="t" style="left:290.80px;top:38.00px;font-size:10px;color:#444;-webkit-text-stroke:0.3px #444;transform:scaleX(1.0792);">A</span>
<span class="t" style="left:315.30px;top:36.00px;font-size:10.8px;color:#444;-webkit-text-stroke:0.25px #444;transform:scaleX(0.9910);">Aa</span>
<span class="t" style="left:344.80px;top:63.00px;font-size:11.3px;color:#444;-webkit-text-stroke:0.3px #444;transform:scaleX(1.1793);">A</span>
<span class="t" style="left:311.40px;top:62.00px;font-size:8px;color:#444;font-weight:bold;transform:scaleX(0.8776);">ab</span>
<span class="t" style="left:353.60px;top:34.00px;font-size:10.4px;color:#5a5a5a;-webkit-text-stroke:0.2px #5a5a5a;transform:scaleX(0.9802);">A</span>
<span class="t" style="left:531.90px;top:37.00px;font-size:7.6px;color:#505050;font-weight:bold;transform:scaleX(1.5823);">¶</span>
<span class="t" style="left:546.50px;top:37.00px;font-size:7.6px;color:#505050;font-weight:bold;transform:scaleX(1.5823);">¶</span>
<span class="t" style="left:574.30px;top:33.00px;font-size:8.4px;color:#4472c4;font-weight:bold;transform:scaleX(1.0062);">A</span>
<span class="t" style="left:574.50px;top:40.00px;font-size:8.4px;color:#8a62b3;font-weight:bold;transform:scaleX(1.1122);">Z</span>
<span class="t" style="left:602.90px;top:34.00px;font-size:12.2px;color:#606060;-webkit-text-stroke:0.18px #606060;transform:scaleX(1.3747);">¶</span>
<span class="t" style="left:1105.00px;top:47.00px;font-size:9px;color:#555;font-weight:bold;transform:scaleX(0.9969);">a</span>
<span class="t" style="left:1110.00px;top:47.00px;font-size:9px;color:#8a62b3;font-weight:bold;transform:scaleX(0.9455);">b</span>
<span class="t" style="left:1109.30px;top:53.00px;font-size:9px;color:#555;font-weight:bold;transform:scaleX(0.9969);">a</span>
<span class="t" style="left:1114.30px;top:53.00px;font-size:9px;color:#3f6fb3;font-weight:bold;transform:scaleX(0.9969);">c</span>
<span class="t" style="left:890.20px;top:30.00px;font-size:27px;color:#1a1a1a;-webkit-text-stroke:0.5px #fff;clip-path:inset(5.4px 0 0 0);transform:scaleX(0.9952);">AaB</span>
</div>

<div class="a" style="left:2px;top:136px;width:250.5px;height:48.5px;border:7px solid #fb0000;box-sizing:border-box;"></div>
<svg style="left:0;top:0;" width="1200" height="675" viewBox="0 0 1200 675"><polygon points="378,115.3 284.7,141 282.7,137 265,154 288.7,157.6 289.6,152.3" fill="#fb0000"/></svg>

</body></html>
